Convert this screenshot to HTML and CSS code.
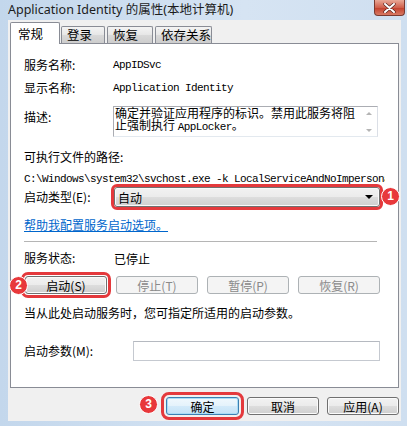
FILE: index.html
```html
<!DOCTYPE html>
<html>
<head>
  <title>Application Identity 的属性(本地计算机)</title>
  <link rel="stylesheet" href="styles.css">
</head>
<body>
  <div class="window">
    <div class="titlebar">
      <span class="title">Application Identity 的属性(本地计算机)</span>
      <span class="close">
        <svg width="13" height="10" viewBox="0 0 13 10">
          <path d="M2 1 L11 9 M11 1 L2 9" stroke="#4a1c16" stroke-width="3.2" stroke-linecap="round"/>
          <path d="M2 1 L11 9 M11 1 L2 9" stroke="#ffffff" stroke-width="2" stroke-linecap="round"/>
        </svg>
      </span>
    </div>

    <div class="client">
      <!-- 选项卡 -->
      <div class="tabs">
        <div class="tab active tab-general">常规</div>
        <div class="tab tab-logon">登录</div>
        <div class="tab tab-recovery">恢复</div>
        <div class="tab tab-deps">依存关系</div>
      </div>

      <div class="panel">
        <div class="field">
          <span class="label">服务名称:</span>
          <span class="mono">AppIDSvc</span>
        </div>
        <div class="field field-display">
          <span class="label">显示名称:</span>
          <span class="mono">Application Identity</span>
        </div>
        <div class="field-desc">
          <span class="label label-top">描述:</span>
          <div class="textbox">
            <div class="textbox-text">确定并验证应用程序的标识。禁用此服务将阻止强制执行 <span class="mono">AppLocker</span>。</div>
            <div class="scrollbar">
              <span class="arrow-up"></span>
              <span class="arrow-down"></span>
            </div>
          </div>
        </div>

        <div class="exe-label">可执行文件的路径:</div>
        <div class="exe-path mono">C:\Windows\system32\svchost.exe -k LocalServiceAndNoImpersonation</div>

        <div class="field field-startup">
          <span class="label">启动类型(E):</span>
          <div class="combo marked">
            <span>自动</span>
            <span class="combo-arrow"></span>
          </div>
        </div>

        <a class="help-link" href="#">帮助我配置服务启动选项。</a>
        <div class="separator"></div>

        <div class="field field-status">
          <span class="label">服务状态:</span>
          <span>已停止</span>
        </div>

        <div class="svc-buttons">
          <button class="btn marked-btn">启动(S)</button>
          <button class="btn" disabled>停止(T)</button>
          <button class="btn" disabled>暂停(P)</button>
          <button class="btn" disabled>恢复(R)</button>
        </div>

        <div class="hint">当从此处启动服务时，您可指定所适用的启动参数。</div>

        <div class="field field-params">
          <span class="label label-wide">启动参数(M):</span>
          <div class="input"></div>
        </div>
      </div>

      <div class="footer">
        <button class="btn btn-default marked-ok">确定</button>
        <button class="btn">取消</button>
        <button class="btn">应用(A)</button>
      </div>
    </div>

    <!-- 标注 -->
    <span class="badge badge-1">1</span>
    <span class="badge badge-2">2</span>
    <span class="badge badge-3">3</span>
  </div>
</body>
</html>
```

FILE: styles.css
```css
* {
  box-sizing: border-box;
}
body {
  margin: 0;
  font-family: "Noto Sans CJK SC", "Noto Sans", sans-serif;
  font-size: 12px;
  color: #000000;
}
.window {
  position: relative;
  width: 407px;
  height: 426px;
  background: linear-gradient(90deg, #c3d7ec, #d6e4f3 60%, #cfdff0);
  overflow: hidden;
}
.titlebar {
  height: 20px;
  display: flex;
  align-items: flex-start;
}
.title {
  padding: 1px 0 0 8px;
  font-family: "Noto Sans", "Noto Sans CJK SC", sans-serif;
  font-size: 12.5px;
  line-height: 18px;
  color: #1c1c1c;
}
.close {
  margin-left: auto;
  margin-right: 2px;
  width: 31px;
  height: 16px;
  border: 1px solid #7a3a30;
  border-top: none;
  border-radius: 0 0 4px 4px;
  background: linear-gradient(#e9a896, #d0604c 50%, #c4432f 55%, #d87a64);
  display: flex;
  align-items: center;
  justify-content: center;
}
.client {
  margin: 0 6px 0 8px;
  height: 401px;
  padding: 2px 2px 0 2px;
  background: #f0f0f0;
}

/* tabs */
.tabs {
  display: flex;
  align-items: flex-end;
  height: 21px;
  position: relative;
  z-index: 1;
}
.tab {
  height: 17px;
  margin-right: 2px;
  padding-left: 5px;
  border: 1px solid #898c95;
  border-bottom: none;
  border-radius: 2px 2px 0 0;
  background: linear-gradient(#f4f4f4, #e6e6e6 50%, #d9d9d9 51%, #cdcdcd);
  line-height: 16px;
  font-size: 12.5px;
}
.tab.active {
  height: 22px;
  margin-bottom: -1px;
  margin-right: 1px;
  padding-left: 7px;
  background: #ffffff;
  line-height: 21px;
}
.tab-general { width: 50px; }
.tab-logon { width: 44px; }
.tab-recovery { width: 46px; }
.tab-deps { width: 57px; }

/* panel */
.panel {
  height: 345px;
  padding: 11px 18px 0 13px;
  border: 1px solid #898c95;
  background: #ffffff;
}
.field {
  display: flex;
  align-items: center;
  height: 20px;
}
.label {
  width: 89px;
  flex-shrink: 0;
  line-height: 16px;
}
.label-wide {
  width: 109px;
}
.mono {
  font-family: "Liberation Mono", "DejaVu Sans Mono", monospace;
  font-size: 11px;
  letter-spacing: -0.6px;
}
.field-display {
  margin-top: 3px;
}
.field-desc {
  display: flex;
  align-items: flex-start;
  margin-top: 8px;
}
.label-top {
  padding-top: 3px;
}
.textbox {
  display: flex;
  width: 265px;
  height: 31px;
  border: 1px solid #abadb3;
  border-right-color: #dbdfe6;
  border-bottom-color: #e3e9ef;
  background: #ffffff;
}
.textbox-text {
  flex: 1;
  padding: 0 2px 0 1px;
  line-height: 12px;
}
.textbox-text .mono {
  font-size: 11px;
}
.scrollbar {
  width: 16px;
  display: flex;
  flex-direction: column;
  justify-content: space-between;
  align-items: center;
  padding: 5px 0 4px;
}
.arrow-up,
.arrow-down {
  width: 0;
  height: 0;
  border-left: 3px solid transparent;
  border-right: 3px solid transparent;
}
.arrow-up {
  border-bottom: 3px solid #b4b4b4;
}
.arrow-down {
  border-top: 3px solid #b4b4b4;
}
.exe-label {
  margin-top: 12px;
  line-height: 16px;
}
.exe-path {
  margin-top: 7px;
  margin-right: -5px;
  height: 14px;
  line-height: 14px;
  white-space: nowrap;
  overflow: hidden;
}
.field-startup {
  margin-top: 1px;
}
.combo {
  display: flex;
  align-items: center;
  justify-content: space-between;
  width: 266px;
  height: 20px;
  margin-left: 1px;
  padding: 0 6px 0 3px;
  border: 1px solid #707070;
  border-radius: 3px;
  background: linear-gradient(#f2f2f2, #ebebeb 50%, #dddddd 51%, #cfcfcf);
  box-shadow: inset 0 0 0 1px #fafafa;
}
.combo-arrow {
  width: 0;
  height: 0;
  border-left: 4px solid transparent;
  border-right: 4px solid transparent;
  border-top: 4px solid #000000;
}
.marked {
  outline: 3px solid #e4393c;
  outline-offset: 0;
}
.help-link {
  display: block;
  margin-top: 10px;
  width: max-content;
  line-height: 16px;
  color: #0066cc;
}
.separator {
  margin-top: 8px;
  width: 353px;
  border-top: 1px solid #b5b5b5;
}
.field-status {
  margin-top: 7px;
  height: 18px;
}
.field-status span + span {
  padding-left: 1px;
}

/* buttons */
.btn {
  height: 18px;
  padding: 0;
  border: 1px solid #707070;
  border-radius: 3px;
  background: linear-gradient(#f2f2f2, #ebebeb 50%, #dddddd 51%, #cfcfcf);
  box-shadow: inset 0 0 0 1px #fbfbfb;
  font-family: "Noto Sans CJK SC", "Noto Sans", sans-serif;
  font-size: 12px;
  line-height: 15px;
  color: #000000;
}
.btn:disabled {
  border-color: #adb2b5;
  background: #f4f4f4;
  box-shadow: none;
  color: #8a8a8a;
}
.btn-default {
  border-color: #3c7fb1;
  background: linear-gradient(#f1f8fd, #e4f2fb 50%, #d3eafa 51%, #c4e2f6);
  box-shadow: inset 0 0 0 1px #a9dcf6;
}
.svc-buttons {
  display: flex;
  justify-content: space-between;
  margin-top: 9px;
  padding-left: 1px;
}
.svc-buttons .btn {
  width: 82px;
}
.marked-btn {
  outline: 3px solid #e4393c;
  outline-offset: 1px;
}
.hint {
  margin-top: 11px;
  line-height: 16px;
}
.field-params {
  margin-top: 20px;
}
.input {
  width: 247px;
  height: 20px;
  border: 1px solid #c5c9d0;
  border-top-color: #b5b9c0;
  background: #ffffff;
}
.footer {
  display: flex;
  justify-content: flex-end;
  gap: 8px;
  margin-top: 9px;
}
.footer .btn {
  width: 72px;
}
.footer .btn-default {
  width: 73px;
}
.marked-ok {
  outline: 3px solid #e4393c;
  outline-offset: 2px;
}

/* annotation badges */
.badge {
  position: absolute;
  width: 19px;
  height: 19px;
  border-radius: 50%;
  background: #e8383b;
  border: 1px solid #ffffff;
  color: #ffffff;
  font-family: "Liberation Sans", Arial, sans-serif;
  font-weight: bold;
  font-size: 12px;
  line-height: 17px;
  text-align: center;
}
.badge-1 {
  left: 381px;
  top: 187px;
}
.badge-2 {
  left: 9px;
  top: 276px;
}
.badge-3 {
  left: 139px;
  top: 395px;
}
```
